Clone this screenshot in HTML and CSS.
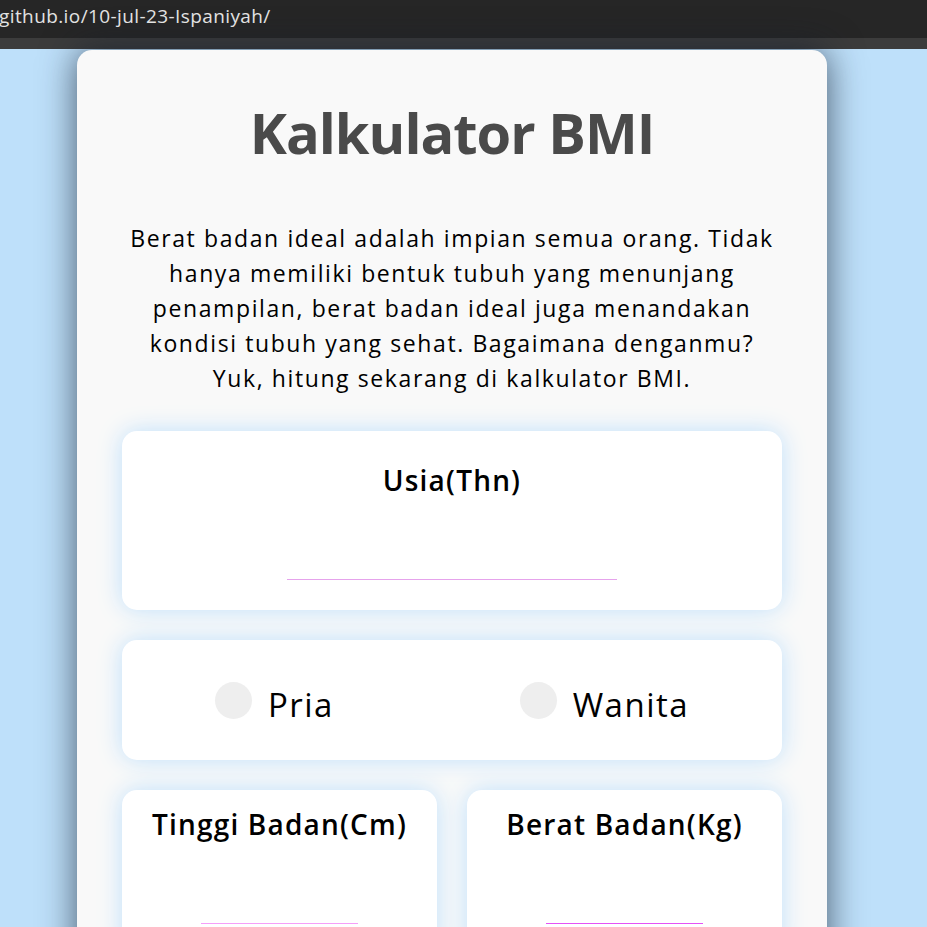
FILE: index.html
```html
<!DOCTYPE html>
<html lang="id">
<head>
<meta charset="utf-8">
<title>Kalkulator BMI</title>
<link rel="stylesheet" href="styles.css">
</head>
<body>
<div class="chrome"><span class="url">github.io/10-jul-23-Ispaniyah/</span></div>
<div class="tabstrip"></div>
<main class="page">
  <section class="card">
    <h1 class="title">Kalkulator BMI</h1>
    <p class="intro">Berat badan ideal adalah impian semua orang. Tidak<br>hanya memiliki bentuk tubuh yang menunjang<br>penampilan, berat badan ideal juga menandakan<br>kondisi tubuh yang sehat. Bagaimana denganmu?<br>Yuk, hitung sekarang di kalkulator BMI.</p>
    <form class="form">
      <div class="box box-age">
        <label class="label" for="usia">Usia(Thn)</label>
        <input class="field field-age" id="usia" type="text">
      </div>
      <div class="box box-gender">
        <label class="radio"><span class="dot"></span><span class="radio-text">Pria</span></label>
        <label class="radio"><span class="dot"></span><span class="radio-text">Wanita</span></label>
      </div>
      <div class="row">
        <div class="box box-half">
          <label class="label" for="tinggi">Tinggi Badan(Cm)</label>
          <input class="field field-short field-tinggi" id="tinggi" type="text">
        </div>
        <div class="box box-half">
          <label class="label" for="berat">Berat Badan(Kg)</label>
          <input class="field field-short field-berat" id="berat" type="text">
        </div>
      </div>
    </form>
  </section>
</main>
</body>
</html>
```

FILE: styles.css
```css
html, body {
  margin: 0;
  padding: 0;
  height: 927px;
  overflow: hidden;
}

body {
  background: #bee0fa;
  font-family: "Open Sans", "Liberation Sans", sans-serif;
}

.chrome {
  height: 38px;
  background: #262626;
  overflow: hidden;
  white-space: nowrap;
}

.url {
  display: block;
  margin-left: -1px;
  font-family: "Open Sans", sans-serif;
  font-size: 19px;
  letter-spacing: 0.4px;
  line-height: 32px;
  color: #e2e2e2;
}

.tabstrip {
  height: 11px;
  background: #3c3c3c;
}

.page {
  padding-top: 1px;
  background: #bee0fa;
}

.card {
  width: 750px;
  margin-left: 77px;
  box-sizing: border-box;
  padding: 49px 45px 40px;
  background: #f9f9f9;
  border-radius: 15px;
  box-shadow: 0 0 36px rgba(20, 30, 45, 0.7);
}

.title {
  margin: 0;
  text-align: center;
  font-size: 56px;
  line-height: 67px;
  font-weight: 700;
  letter-spacing: -1px;
  color: #4a4a4a;
}

.intro {
  margin: 55px 0 35px;
  text-align: center;
  font-size: 23px;
  line-height: 35px;
  letter-spacing: 1.6px;
  color: #000;
}

.form {
  display: flex;
  flex-direction: column;
  gap: 30px;
}

.box {
  background: #fff;
  border-radius: 15px;
  box-shadow: 0 0 24px #bfe0fb;
}

.box-age,
.box-half {
  display: flex;
  flex-direction: column;
  align-items: center;
  padding: 29px 0 30px;
}

.box-half {
  padding-top: 14px;
}

.label {
  display: block;
  font-size: 28px;
  line-height: 40px;
  font-weight: 600;
  letter-spacing: 1.2px;
  color: #000;
}

.field {
  display: block;
  margin-top: 39px;
  height: 41px;
  box-sizing: border-box;
  padding: 0;
  border: none;
  border-bottom: 1px solid #e6a3ec;
  background: transparent;
  outline: none;
  font: inherit;
}

.field-age {
  width: 330px;
}

.field-short {
  width: 157px;
}

.field-tinggi {
  border-bottom-color: #f59ef9;
}

.field-berat {
  border-bottom-color: #e452f6;
}

.box-gender {
  height: 120px;
  display: flex;
  align-items: center;
  justify-content: space-around;
}

.radio {
  display: flex;
  align-items: center;
  gap: 16px;
  font-size: 33px;
  letter-spacing: 1.5px;
  color: #000;
}

.dot {
  width: 37px;
  height: 37px;
  border-radius: 50%;
  background: #eeeeee;
}

.radio-text {
  line-height: 40px;
  padding-top: 9px;
}

.row {
  display: grid;
  grid-template-columns: 1fr 1fr;
  gap: 30px;
}
```
